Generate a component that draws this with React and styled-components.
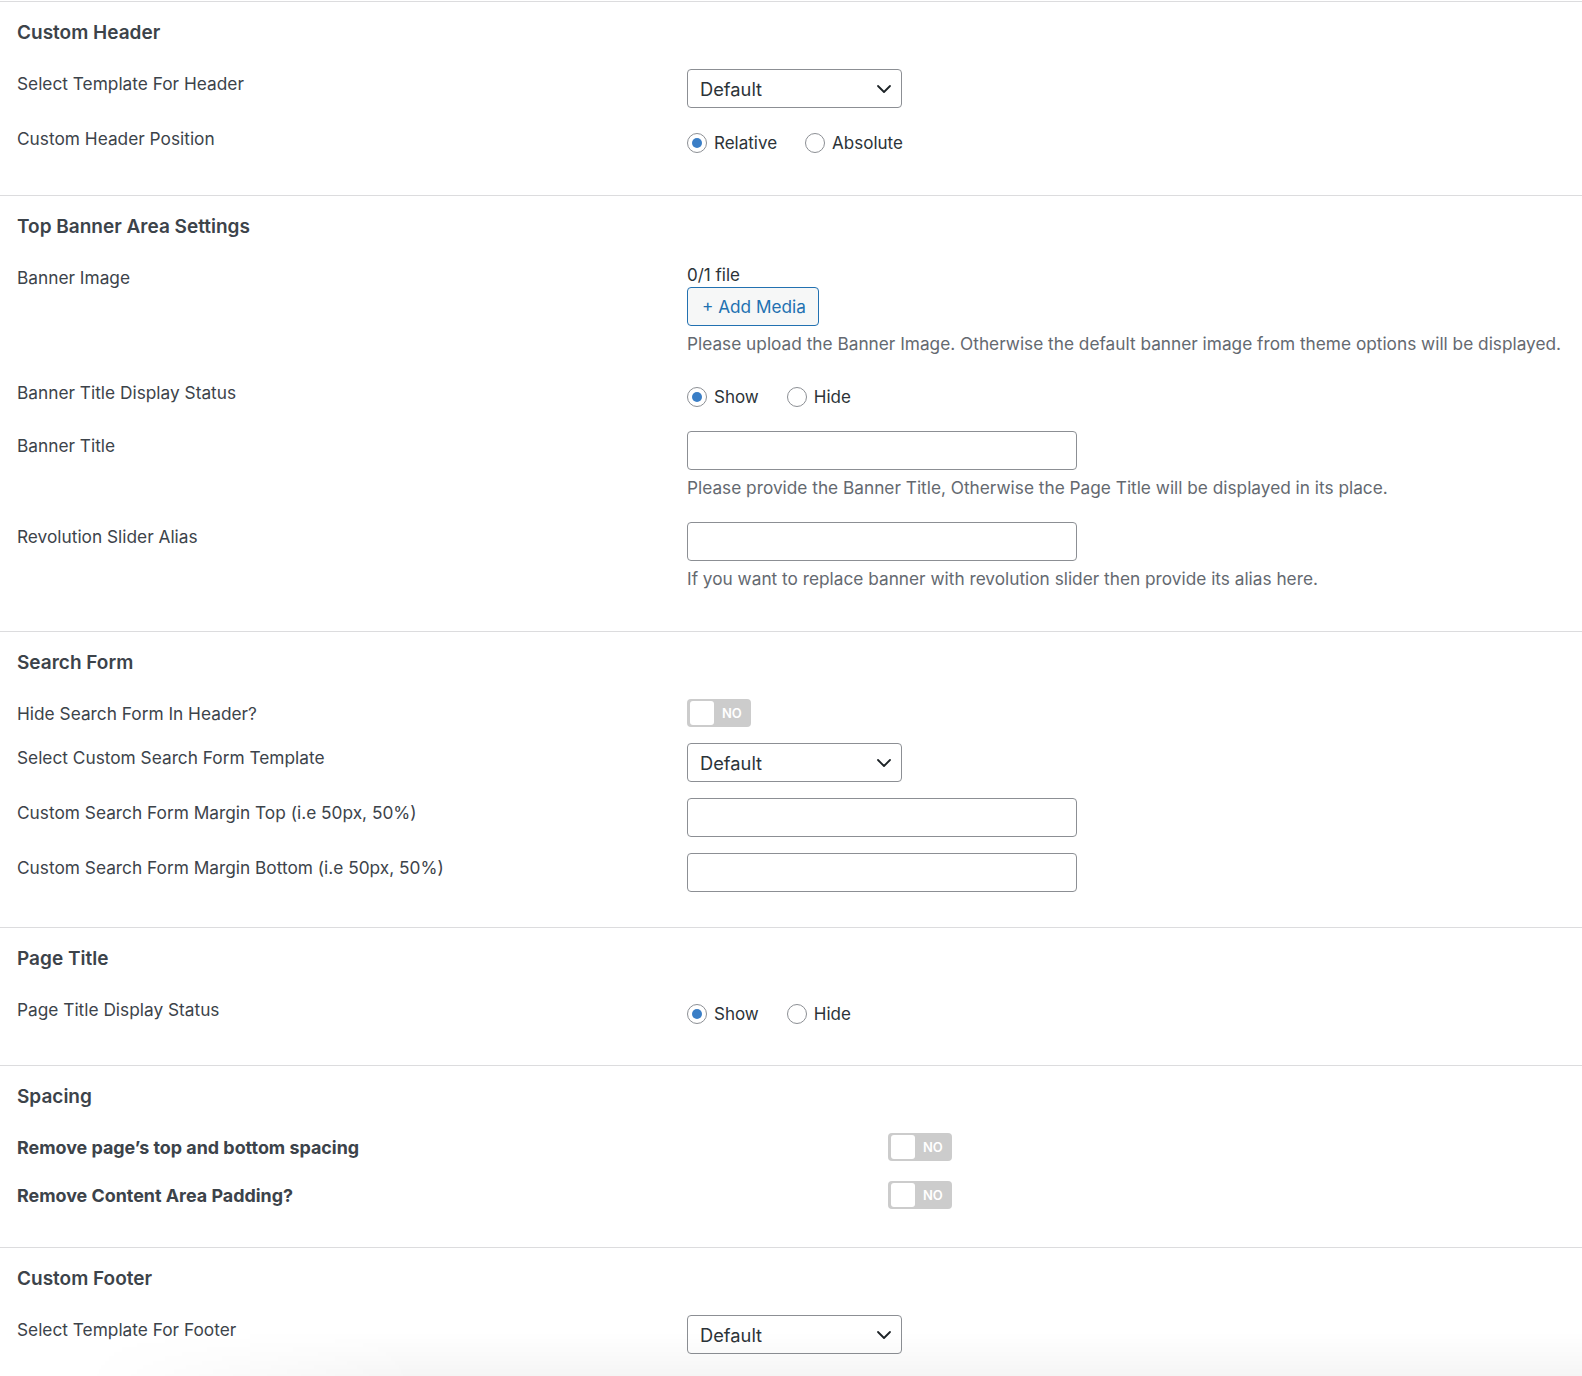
import React from 'react'
import styled, { createGlobalStyle } from 'styled-components'

const GlobalStyle = createGlobalStyle`
  body {
    margin: 0;
    background: #fff;
    font-family: Inter, "Liberation Sans", sans-serif;
    color: #3c434a;
  }
`;

const Page = styled.div`
  padding-top: 1px;
`;

const Section = styled.section`
  border-top: 1px solid #dcdcde;
  padding: 19px 17px ${p => (p.$pb ?? 34) + 'px'};
`;

const Heading = styled.h2`
  margin: 0 0 24px;
  font-size: 19px;
  line-height: 24px;
  font-weight: 600;
  color: #3c434a;
`;

const Rows = styled.div`
  display: flex;
  flex-direction: column;
  gap: ${p => (p.$gap ?? 16) + 'px'};
`;

const Row = styled.div`
  display: grid;
  grid-template-columns: ${p => (p.$labelWidth ?? 670) + 'px'} 1fr;
  align-items: start;
`;

const Label = styled.div`
  padding-top: 3px;
  font-size: ${p => (p.$bold ? '17.9px' : '17.3px')};
  line-height: 24px;
  font-weight: ${p => (p.$bold ? 700 : 400)};
  color: #3c434a;
  white-space: nowrap;
`;

const Control = styled.div`
  display: flex;
  flex-direction: column;
  align-items: flex-start;
`;

const SelectBox = styled.div`
  box-sizing: border-box;
  width: 215px;
  height: 39px;
  border: 1px solid #8c8f94;
  border-radius: 4px;
  padding: 0 9px 0 12px;
  display: flex;
  align-items: center;
  justify-content: space-between;
  font-size: 18.3px;
  color: #2c3338;
  background: #fff;
`;

const TextInput = styled.input`
  box-sizing: border-box;
  width: 390px;
  height: 39px;
  border: 1px solid #8c8f94;
  border-radius: 4px;
  background: #fff;
  font: inherit;
  font-size: 17px;
  padding: 0 10px;
  margin: 0;
  outline: none;
`;

const RadioGroup = styled.div`
  display: flex;
  gap: 28px;
  padding: 7px 0 6px;
`;

const RadioOption = styled.label`
  display: inline-flex;
  align-items: center;
  gap: 7px;
  height: 24px;
  font-size: 17px;
  color: #2c3338;
`;

const RadioCircle = styled.span`
  box-sizing: border-box;
  width: 20px;
  height: 20px;
  border-radius: 50%;
  border: 1px solid #8c8f94;
  background: #fff;
  display: flex;
  align-items: center;
  justify-content: center;

  &::after {
    content: '';
    width: 10px;
    height: 10px;
    border-radius: 50%;
    background: ${p => (p.$checked ? '#3a7ec6' : 'transparent')};
  }
`;

const FileCount = styled.div`
  font-size: 17px;
  line-height: 24px;
  color: #2c3338;
`;

const MediaButton = styled.button`
  box-sizing: border-box;
  height: 39px;
  padding: 0 12px 0 14px;
  border: 1px solid #2271b1;
  border-radius: 4px;
  background: #f6f7f7;
  color: #2271b1;
  font: inherit;
  font-size: 17.2px;
  cursor: pointer;
`;

const Description = styled.p`
  margin: 6px 0 6px;
  font-size: 17.25px;
  line-height: 24px;
  color: #646970;
  white-space: nowrap;
`;

const Toggle = styled.div`
  box-sizing: border-box;
  width: 64px;
  height: 28px;
  border-radius: 4px;
  background: #cccccc;
  padding: 2px 3px;
  display: flex;
  align-items: center;
  gap: 8px;
`;

const Knob = styled.span`
  width: 24px;
  height: 24px;
  border-radius: 3px;
  background: #fff;
`;

const ToggleText = styled.span`
  font-size: 13px;
  font-weight: 600;
  color: #fff;
`;

const BottomShade = styled.div`
  position: fixed;
  left: 0;
  right: 0;
  bottom: 0;
  height: 44px;
  pointer-events: none;
  background: linear-gradient(to bottom, rgba(0, 0, 0, 0), rgba(0, 0, 0, 0.04));
  -webkit-mask-image: linear-gradient(to right, transparent 80px, #000 420px);
  mask-image: linear-gradient(to right, transparent 80px, #000 420px);
`;

const Chevron = () => (
  <svg width="16" height="10" viewBox="0 0 16 10" fill="none">
    <path d="M2 2l6 6 6-6" stroke="#1d2327" strokeWidth="1.8" strokeLinecap="round" strokeLinejoin="round" />
  </svg>
);

const Select = ({ value }) => (
  <SelectBox>
    <span>{value}</span>
    <Chevron />
  </SelectBox>
);

const Radios = ({ options, checked }) => (
  <RadioGroup>
    {options.map(o => (
      <RadioOption key={o}>
        <RadioCircle $checked={o === checked} />
        {o}
      </RadioOption>
    ))}
  </RadioGroup>
);

const Switch = () => (
  <Toggle>
    <Knob />
    <ToggleText>NO</ToggleText>
  </Toggle>
);

export default function App() {
  return (
    <Page>
      <GlobalStyle />

      <Section>
        <Heading>Custom Header</Heading>
        <Rows>
          <Row>
            <Label>Select Template For Header</Label>
            <Control><Select value="Default" /></Control>
          </Row>
          <Row>
            <Label>Custom Header Position</Label>
            <Control><Radios options={['Relative', 'Absolute']} checked="Relative" /></Control>
          </Row>
        </Rows>
      </Section>

      <Section>
        <Heading>Top Banner Area Settings</Heading>
        <Rows>
          <Row>
            <Label>Banner Image</Label>
            <Control>
              <FileCount>0/1 file</FileCount>
              <MediaButton>+ Add Media</MediaButton>
              <Description>Please upload the Banner Image. Otherwise the default banner image from theme options will be displayed.</Description>
            </Control>
          </Row>
          <Row>
            <Label>Banner Title Display Status</Label>
            <Control><Radios options={['Show', 'Hide']} checked="Show" /></Control>
          </Row>
          <Row>
            <Label>Banner Title</Label>
            <Control>
              <TextInput type="text" />
              <Description>Please provide the Banner Title, Otherwise the Page Title will be displayed in its place.</Description>
            </Control>
          </Row>
          <Row>
            <Label>Revolution Slider Alias</Label>
            <Control>
              <TextInput type="text" />
              <Description>If you want to replace banner with revolution slider then provide its alias here.</Description>
            </Control>
          </Row>
        </Rows>
      </Section>

      <Section $pb={35}>
        <Heading>Search Form</Heading>
        <Rows>
          <Row>
            <Label>Hide Search Form In Header?</Label>
            <Control><Switch /></Control>
          </Row>
          <Row>
            <Label>Select Custom Search Form Template</Label>
            <Control><Select value="Default" /></Control>
          </Row>
          <Row>
            <Label>Custom Search Form Margin Top (i.e 50px, 50%)</Label>
            <Control><TextInput type="text" /></Control>
          </Row>
          <Row>
            <Label>Custom Search Form Margin Bottom (i.e 50px, 50%)</Label>
            <Control><TextInput type="text" /></Control>
          </Row>
        </Rows>
      </Section>

      <Section $pb={33}>
        <Heading>Page Title</Heading>
        <Rows>
          <Row>
            <Label>Page Title Display Status</Label>
            <Control><Radios options={['Show', 'Hide']} checked="Show" /></Control>
          </Row>
        </Rows>
      </Section>

      <Section $pb={38}>
        <Heading>Spacing</Heading>
        <Rows $gap={20}>
          <Row $labelWidth={871}>
            <Label $bold>Remove page’s top and bottom spacing</Label>
            <Control><Switch /></Control>
          </Row>
          <Row $labelWidth={871}>
            <Label $bold>Remove Content Area Padding?</Label>
            <Control><Switch /></Control>
          </Row>
        </Rows>
      </Section>

      <Section>
        <Heading>Custom Footer</Heading>
        <Rows>
          <Row>
            <Label>Select Template For Footer</Label>
            <Control><Select value="Default" /></Control>
          </Row>
        </Rows>
      </Section>

      <BottomShade />
    </Page>
  )
}
